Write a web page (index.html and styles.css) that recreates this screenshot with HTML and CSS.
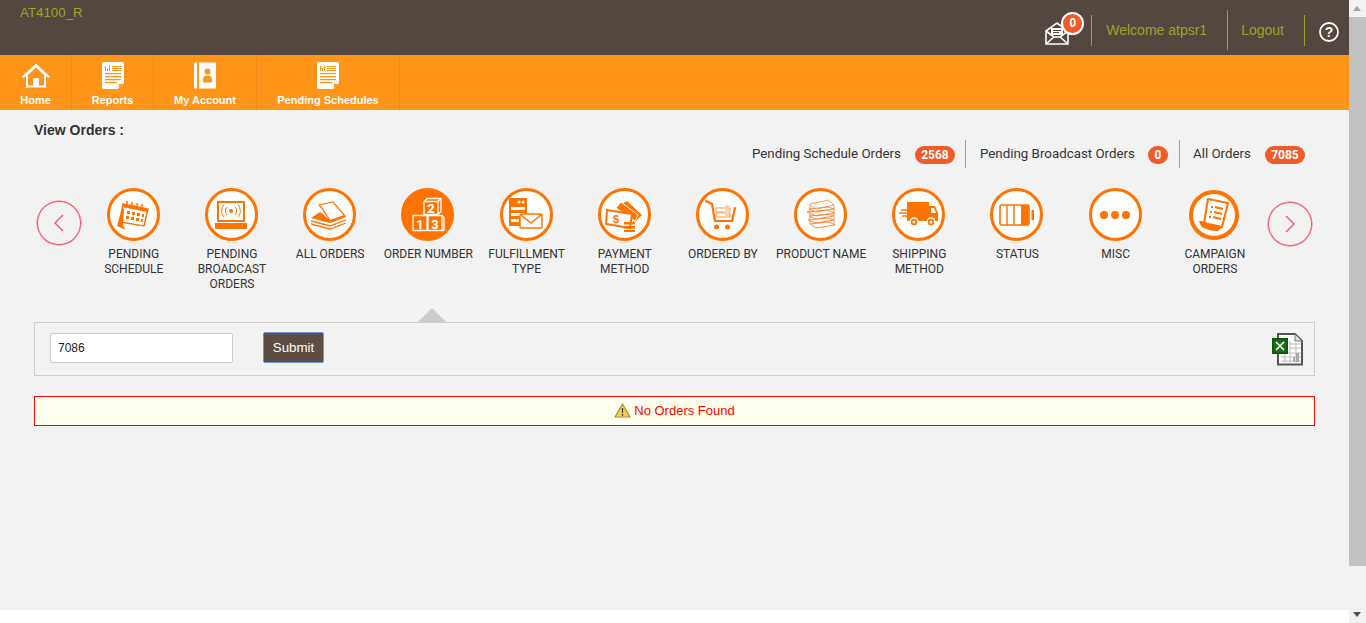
FILE: index.html
```html
<!DOCTYPE html>
<html lang="en">
<head>
  <meta charset="UTF-8" />
  <title>View Orders</title>
  <link rel="stylesheet" href="styles.css">
</head>
<body>
<svg class="defs" width="0" height="0">
  <symbol id="reportIcon" viewBox="0 0 22 27">
    <path d="M2 0h18a2 2 0 0 1 2 2v19l-6 6H2a2 2 0 0 1-2-2V2a2 2 0 0 1 2-2z" fill="#fff"/>
    <path d="M3 9V4h1v5zM5 9V6h1v3zM7 9V3h1v6zM10 4h9v1h-9zM10 6h9v1h-9zM10 8h9v1h-9zM3 11h16v1.2H3zM3 14h16v1.2H3zM3 17h16v1.2H3zM3 20h12v1.2H3z" fill="#ff9518"/>
    <path d="M17 26v-4h4z" fill="#ff9518"/>
  </symbol>
</svg>

<div class="app">
  <div class="page">
    <header class="topbar">
      <div class="site-code">AT4100_R</div>
      <div class="top-right">
        <div class="mail">
          <svg width="25" height="25" viewBox="0 0 25 25">
            <path d="M1 11L12 3l11 8v13H1z" fill="none" stroke="#fff" stroke-width="1.6"/>
            <path d="M1 24l8-7h6l8 7M1 11l8 6M23 11l-8 6" fill="none" stroke="#fff" stroke-width="1.6"/>
            <path d="M6 8h12v7H6z" fill="#fff"/>
            <path d="M8 10h8v1H8zM8 12h6v1H8z" fill="#53473f"/>
          </svg>
          <span class="mail-count">0</span>
        </div>
        <span class="top-link welcome">Welcome atpsr1</span>
        <span class="top-link logout">Logout</span>
        <span class="help">
          <svg width="20" height="20" viewBox="0 0 20 20">
            <circle cx="10" cy="10" r="9" fill="none" stroke="#fff" stroke-width="1.8"/>
            <text x="10" y="14.5" text-anchor="middle" class="help-mark">?</text>
          </svg>
        </span>
      </div>
    </header>

    <nav class="mainnav">
      <a class="nav-item nav-home">
        <svg width="30" height="26" viewBox="0 0 30 26">
          <path d="M15 1L1 14l1.500 1.500L5 13.500V25h20V13.500l2.500 2L29 14z" fill="#fff"/>
          <path d="M15 5L7 12.500V23h5v-7h6v7h5V12.500z" fill="#ff9518"/>
          <path d="M12 16h6v7h-6z" fill="#fff"/>
        </svg>
        <span>Home</span>
      </a>
      <a class="nav-item nav-reports">
        <svg width="22" height="27"><use href="#reportIcon"/></svg>
        <span>Reports</span>
      </a>
      <a class="nav-item nav-account">
        <svg width="22" height="26" viewBox="0 0 22 26">
          <path d="M1 0h2v26H1a1 1 0 0 1-1-1V1a1 1 0 0 1 1-1zM5 0h16a1 1 0 0 1 1 1v24a1 1 0 0 1-1 1H5z" fill="#fff"/>
          <circle cx="13.500" cy="9" r="3" fill="#ff9518"/>
          <path d="M9 20v-3c0-3 2-4 4.500-4s4.500 1 4.500 4v3z" fill="#ff9518"/>
        </svg>
        <span>My Account</span>
      </a>
      <a class="nav-item nav-pending">
        <svg width="22" height="27"><use href="#reportIcon"/></svg>
        <span>Pending Schedules</span>
      </a>
    </nav>

    <main class="content">
      <h1 class="page-title">View Orders :</h1>

      <div class="counts">
        <div class="count">Pending Schedule Orders <span class="pill">2568</span></div>
        <div class="count">Pending Broadcast Orders <span class="pill pill-round">0</span></div>
        <div class="count">All Orders <span class="pill">7085</span></div>
      </div>

      <div class="carousel">
        <button class="arrow" aria-label="Previous">
          <svg width="12" height="20" viewBox="0 0 12 20"><path d="M10 2l-8 8 8 8" fill="none" stroke="#f2566a" stroke-width="1.400"/></svg>
        </button>
        <div class="filters">
          <div class="filter">
            <div class="ring">
              <svg width="36" height="36" viewBox="0 0 36 36">
                <path d="M8 7l25 5-4 17-24-4z" fill="#fff" stroke="#ff7300" stroke-width="1.500"/>
                <path d="M8 7l25 5-1 3-25-5z" fill="#ff7300"/>
                <path d="M12 14h3v3h-3zM17 15h3v3h-3zM22 16h3v3h-3zM27 17h2v3h-2zM11 19h3v3h-3zM16 20h3v3h-3zM21 21h3v3h-3zM26 22h2v3h-2z" fill="#ff7300"/>
                <path d="M7 11L2 29l9 4-3-4 1-17z" fill="#ff7300"/>
                <path d="M12 4v5M17 5v5M22 6v5M27 7v5" stroke="#ff7300" stroke-width="1.500"/>
              </svg>
            </div>
            <div class="filter-name">PENDING SCHEDULE</div>
          </div>
          <div class="filter">
            <div class="ring">
              <svg width="36" height="36" viewBox="0 0 36 36">
                <rect x="5" y="5" width="26" height="19" fill="none" stroke="#ff7300" stroke-width="2"/>
                <path d="M2 26h32v5a1 1 0 0 1-1 1H3a1 1 0 0 1-1-1z" fill="#ff7300"/>
                <circle cx="18" cy="14" r="2" fill="#ff7300"/>
                <path d="M14 10c-2 2-2 6 0 8M22 10c2 2 2 6 0 8M11 8c-3 3-3 9 0 12M25 8c3 3 3 9 0 12" fill="none" stroke="#ff7300"/>
              </svg>
            </div>
            <div class="filter-name">PENDING BROADCAST ORDERS</div>
          </div>
          <div class="filter">
            <div class="ring">
              <svg width="38" height="36" viewBox="0 0 38 36">
                <path d="M8 8l14-3 12 14-14 6C16 19 13 13 8 8z" fill="#fff" stroke="#ff7300" stroke-width="1.200"/>
                <path d="M9 15L0 21l19 5 16-6-2-2-14 5z" fill="#ff7300"/>
                <path d="M0 24l19 5 16-6M0 27l19 5 16-6" fill="none" stroke="#ff7300" stroke-width="1.300"/>
              </svg>
            </div>
            <div class="filter-name">ALL ORDERS</div>
          </div>
          <div class="filter filter-active">
            <div class="ring">
              <svg width="36" height="36" viewBox="0 0 36 36">
                <path d="M14 4.500l3-3h14v13l-3 3H14zM14 4.500h14v13M28 4.500l3-3" fill="none" stroke="#fff" stroke-width="1.300"/>
                <path d="M3 18.500h14v15H3zM18 18.500h14l2 2v13H18zM32 18.500v15" fill="none" stroke="#fff" stroke-width="1.300"/>
                <text x="21" y="15.500" text-anchor="middle" class="block-num">2</text>
                <text x="10" y="31.500" text-anchor="middle" class="block-num">1</text>
                <text x="25" y="31.500" text-anchor="middle" class="block-num">3</text>
              </svg>
            </div>
            <div class="filter-name">ORDER NUMBER</div>
          </div>
          <div class="filter">
            <div class="ring">
              <svg width="36" height="36" viewBox="0 0 36 36">
                <path d="M1 1h18v28H1z" fill="#ff7300"/>
                <path d="M3 10h14v3H3zM3 16h14v3H3zM3 22h8v3H3z" fill="#fff"/>
                <circle cx="11" cy="5" r="1.500" fill="#fff"/><circle cx="15" cy="5" r="1.500" fill="#fff"/>
                <rect x="12" y="17" width="22" height="14" rx="1.500" fill="#fff" stroke="#ff7300" stroke-width="1.500"/>
                <path d="M13 18l10 8 10-8" fill="none" stroke="#ff7300" stroke-width="1.500"/>
              </svg>
            </div>
            <div class="filter-name">FULFILLMENT TYPE</div>
          </div>
          <div class="filter">
            <div class="ring">
              <svg width="38" height="36" viewBox="0 0 38 36">
                <path d="M14 9L22 4l15 14-7 7z" fill="#ff7300"/>
                <path d="M11 11l5-6 17 13-3 6z" fill="#ff7300" stroke="#fff"/>
                <path d="M2 13l25 4-2 14L1 27z" fill="#fff" stroke="#ff7300" stroke-width="2"/>
                <text x="8" y="26" class="money">$</text>
                <path d="M19 25h11v2.500H19zM19 29h11v2.500H19zM19 33h11V35H19z" fill="#ff7300"/>
              </svg>
            </div>
            <div class="filter-name">PAYMENT METHOD</div>
          </div>
          <div class="filter">
            <div class="ring">
              <svg width="36" height="36" viewBox="0 0 36 36">
                <path d="M2 4l6 3 3 17h17l3-13" fill="none" stroke="#ff7300" stroke-width="2.200" stroke-linecap="round"/>
                <path d="M12 11h14v4H12zM12 16h14v4H12z" fill="none" stroke="#ff9a4d"/>
                <path d="M21 8h4v12h-4z" fill="#ffd0ac"/>
                <circle cx="12.500" cy="30" r="2.500" fill="#ff7300"/><circle cx="23.500" cy="30" r="2.500" fill="#ff7300"/>
              </svg>
            </div>
            <div class="filter-name">ORDERED BY</div>
          </div>
          <div class="filter">
            <div class="ring">
              <svg width="36" height="36" viewBox="0 0 36 36" fill="none" stroke="#ff9a5c">
                <path d="M7 7l18-4 6 5-18 4z" fill="#fff"/>
                <path d="M6 12l19-2 6 2-18 3zM4 15l20-2 8 3-19 3zM6 19l19-2 6 2-18 3zM5 23l20-2 6 2-18 3zM7 27l19-2 6 3-19 3z" stroke="#ff8a3d"/>
                <path d="M7 7v20M31 8v20"/>
              </svg>
            </div>
            <div class="filter-name">PRODUCT NAME</div>
          </div>
          <div class="filter">
            <div class="ring">
              <svg width="40" height="36" viewBox="0 0 40 36">
                <path d="M8 5h22v19H8z" fill="#ff7300"/>
                <path d="M30 9h6l3 7v8h-9z" fill="#ff7300"/>
                <path d="M32 11h3l2 5h-5z" fill="#fff"/>
                <circle cx="15" cy="25" r="4" fill="#ff7300" stroke="#fff" stroke-width="1.500"/>
                <circle cx="32" cy="25" r="4" fill="#ff7300" stroke="#fff" stroke-width="1.500"/>
                <circle cx="15" cy="25" r="1.500" fill="#fff"/><circle cx="32" cy="25" r="1.500" fill="#fff"/>
                <path d="M2 13h6M0 16h8M3 19h5" stroke="#ff7300" stroke-width="1.300"/>
              </svg>
            </div>
            <div class="filter-name">SHIPPING METHOD</div>
          </div>
          <div class="filter">
            <div class="ring">
              <svg width="36" height="22" viewBox="0 0 36 22">
                <rect x="1" y="1" width="29" height="20" rx="1.500" fill="#fff" stroke="#ff7300" stroke-width="1.600"/>
                <path d="M8 1v20M15 1v20" stroke="#ff7300" stroke-width="1.400"/>
                <path d="M22 1h8v20h-8z" fill="#ff7300"/>
                <path d="M32.500 6H35v10h-2.500z" fill="#ff7300"/>
              </svg>
            </div>
            <div class="filter-name">STATUS</div>
          </div>
          <div class="filter">
            <div class="ring">
              <svg width="32" height="10" viewBox="0 0 32 10">
                <circle cx="5" cy="5" r="4" fill="#ff7300"/><circle cx="16" cy="5" r="4" fill="#ff7300"/><circle cx="27" cy="5" r="4" fill="#ff7300"/>
              </svg>
            </div>
            <div class="filter-name">MISC</div>
          </div>
          <div class="filter filter-campaign">
            <div class="ring">
              <svg width="32" height="34" viewBox="0 0 32 34">
                <path d="M10 1l20 4-6 24-18-4z" fill="#fff" stroke="#ff7300" stroke-width="2"/>
                <path d="M13 8h2v2h-2zM12 13h2v2h-2zM11 18h2v2h-2z" fill="#ff7300"/>
                <path d="M17 9l8 2M16 14l8 2M15 19l8 2" stroke="#ff7300" stroke-width="2"/>
                <path d="M1 23c5 0 6 2 10 3l13 3c-2 2-3 4-5 4-6 0-10-2-13-3-3-1-4-4-5-7z" fill="#ff7300"/>
              </svg>
            </div>
            <div class="filter-name">CAMPAIGN ORDERS</div>
          </div>
        </div>
        <button class="arrow arrow-next" aria-label="Next">
          <svg width="12" height="20" viewBox="0 0 12 20"><path d="M2 2l8 8-8 8" fill="none" stroke="#f2566a" stroke-width="1.400"/></svg>
        </button>
      </div>

      <div class="search-panel">
        <input class="search-input" type="text" value="7086">
        <button class="submit-btn">Submit</button>
        <svg class="excel" width="32" height="33" viewBox="0 0 32 33">
          <path d="M6 1h17l7 7v23.500H6z" fill="#fff" stroke="#555" stroke-width="2"/>
          <path d="M23 1v7h7z" fill="#ddd" stroke="#777"/>
          <path d="M9 20h20M9 24h20M9 28h20M13 15v16M18 8v23M24 10v21M18 11h11M18 15h11" stroke="#bbb" stroke-width="1"/>
          <path d="M21 29v-5h2v5zM24 29v-9h3v9z" fill="#aaa"/>
          <rect x="1" y="6" width="14" height="14" fill="#1b6e1b" stroke="#0a5a0a" stroke-width="2"/>
          <path d="M4 9l8 8M12 9l-8 8" stroke="#fff" stroke-width="1.600"/>
        </svg>
      </div>

      <div class="alert-box">
        <svg width="17" height="15" viewBox="0 0 17 15">
          <path d="M8.500 1L16 14H1z" fill="#f7d13d" stroke="#a98a4a" stroke-width="1.200" stroke-linejoin="round"/>
          <path d="M7.800 5h1.400l-.2 5H8z" fill="#333"/>
          <circle cx="8.500" cy="11.800" r=".9" fill="#333"/>
        </svg>
        No Orders Found
      </div>
    </main>
    <div class="page-foot"></div>
  </div>

  <div class="scrollbar">
    <span class="scroll-up"></span>
    <div class="scroll-thumb"></div>
    <span class="scroll-down"></span>
  </div>
</div>
</body>
</html>
```

FILE: styles.css
```css
* {
  box-sizing: border-box;
}
body {
  margin: 0;
  font-family: "Liberation Sans", Arial, sans-serif;
  background: #fff;
  overflow: hidden;
}
.defs {
  position: absolute;
}
.app {
  display: flex;
  height: 623px;
}
.page {
  width: 1349px;
  display: flex;
  flex-direction: column;
}

/* top bar */
.topbar {
  height: 55px;
  background: #53473f;
  display: flex;
  justify-content: space-between;
}
.site-code {
  padding: 5px 0 0 20px;
  font-size: 13.33px;
  color: #9aa528;
}
.top-right {
  display: flex;
  align-items: center;
  height: 55px;
  color: #9aa528;
  font-size: 14px;
}
.mail {
  position: relative;
  width: 46px;
  height: 31px;
  margin-top: 6px;
  border-right: 1px solid #9aa528;
}
.mail svg {
  position: absolute;
  left: -1px;
  top: 5px;
}
.mail-count {
  position: absolute;
  left: 15px;
  top: -3px;
  width: 23px;
  height: 23px;
  border: 2px solid #fff;
  border-radius: 50%;
  background: #f15a29;
  color: #fff;
  font-size: 12px;
  font-weight: bold;
  line-height: 19px;
  text-align: center;
}
.top-link {
  display: flex;
  align-items: center;
}
.welcome {
  padding: 0 20px 0 14px;
  height: 40px;
  margin-top: 5px;
  border-right: 1px solid #9aa528;
}
.logout {
  padding: 0 20px 2px 13px;
  height: 31px;
  margin-top: 6px;
  border-right: 1px solid #9aa528;
}
.help {
  display: block;
  padding: 0 10px 0 14px;
  height: 20px;
  margin-top: 9px;
}
.help-mark {
  font-family: "Liberation Sans", Arial, sans-serif;
  font-size: 14px;
  font-weight: bold;
  fill: #fff;
}

/* main nav */
.mainnav {
  height: 55px;
  background: #ff9518;
  display: flex;
}
.nav-item {
  height: 55px;
  padding-top: 7px;
  border-right: 1px solid #f5861a;
  display: flex;
  flex-direction: column;
  align-items: center;
  color: #fff;
  font-size: 11px;
  font-weight: bold;
}
.nav-item svg {
  height: 27px;
}
.nav-item span {
  margin-top: 5px;
}
.nav-home {
  width: 72px;
}
.nav-reports {
  width: 82px;
}
.nav-account {
  width: 103px;
}
.nav-pending {
  width: 143px;
}

/* content */
.content {
  flex: 1;
  background: #f2f2f2;
  padding: 12px 34px 0;
}
.page-foot {
  height: 13px;
  background: #fff;
}
.page-title {
  margin: 0;
  font-size: 14px;
  line-height: 16px;
  color: #333;
}
.counts {
  display: flex;
  justify-content: flex-end;
  height: 28px;
  margin: 2px 10px 0 0;
}
.count {
  display: flex;
  align-items: center;
  gap: 14px;
  padding: 0 10px 2px 14px;
  border-right: 1px solid #b5a642;
  font-family: Roboto, sans-serif;
  font-size: 13.33px;
  color: #333;
}
.count:last-child {
  border-right: 0;
  padding: 0 0 2px 13px;
}
.pill {
  height: 18px;
  min-width: 40px;
  margin-top: 4px;
  padding: 0 6px;
  border-radius: 9px;
  background: #f15a29;
  color: #fff;
  font-size: 12px;
  font-weight: bold;
  line-height: 18px;
  text-align: center;
}
.pill-round {
  min-width: 20px;
  margin-left: -1px;
  margin-right: 1px;
}

/* filter carousel */
.carousel {
  display: flex;
  margin: 20px -7px 0 3px;
  height: 120px;
}
.arrow {
  flex: none;
  width: 44px;
  height: 44px;
  margin-top: 13px;
  padding: 0;
  border: 1px solid #f2566a;
  border-radius: 50%;
  box-shadow: 0 0 0 0.5px #f2566a;
  background: transparent;
  display: flex;
  align-items: center;
  justify-content: center;
}
.arrow-next {
  margin-top: 14px;
  margin-left: 5.8px;
}
.filters {
  display: flex;
  margin-left: 3.2px;
}
.filter {
  width: 98.2px;
  display: flex;
  flex-direction: column;
  align-items: center;
}
.ring {
  width: 53px;
  height: 53px;
  border: 3px solid #ff7300;
  border-radius: 50%;
  background: #fff;
  display: flex;
  align-items: center;
  justify-content: center;
  overflow: hidden;
}
.filter-active .ring {
  background: #ff7300;
}
.filter-campaign {
  padding-left: 2px;
}
.filter-campaign .ring {
  width: 50px;
  height: 50px;
  margin: 2px 0 1px;
  border-width: 4px;
}
.filter-name {
  margin: 6px 0 0 1px;
  width: 94px;
  font-family: Roboto, sans-serif;
  font-size: 12px;
  line-height: 15px;
  color: #333;
  text-align: center;
}
.block-num {
  font-family: Roboto, sans-serif;
  font-size: 13px;
  font-weight: bold;
  fill: #fff;
}
.money {
  font-family: "Liberation Sans", Arial, sans-serif;
  font-size: 11px;
  font-weight: bold;
  fill: #ff7300;
}

/* search panel */
.search-panel {
  position: relative;
  height: 54px;
  margin-top: 14px;
  border: 1px solid #ccc;
  display: flex;
  align-items: flex-start;
  padding-left: 15px;
}
.search-panel::before {
  content: "";
  position: absolute;
  left: 383px;
  top: -15px;
  border-left: 14px solid transparent;
  border-right: 14px solid transparent;
  border-bottom: 14px solid #ccc;
}
.search-input {
  width: 183px;
  height: 30px;
  margin-top: 10px;
  padding: 0 7px;
  border: 1px solid #ccc;
  border-radius: 2px;
  background: #fff;
  font-family: "Liberation Sans", Arial, sans-serif;
  font-size: 12px;
  color: #222;
}
.submit-btn {
  width: 61px;
  height: 31px;
  margin: 9px 0 0 30px;
  padding: 0;
  border: 1px solid #6b93dc;
  border-radius: 2px;
  background: #5c4d45;
  color: #fff;
  font-family: "Liberation Sans", Arial, sans-serif;
  font-size: 13.33px;
}
.excel {
  margin: 10px 10px 0 auto;
}

/* message */
.alert-box {
  height: 30px;
  margin-top: 20px;
  padding-bottom: 2px;
  border: 1px solid #f00;
  background: #ffffee;
  color: #f00;
  font-size: 13px;
  display: flex;
  align-items: center;
  justify-content: center;
  gap: 3px;
}

/* scrollbar drawn by hand */
.scrollbar {
  width: 17px;
  background: #f1f1f1;
  position: relative;
}
.scroll-thumb {
  position: absolute;
  top: 17px;
  left: 0;
  width: 17px;
  height: 549px;
  background: #c1c1c1;
}
.scroll-up,
.scroll-down {
  position: absolute;
  left: 4px;
  border-left: 4px solid transparent;
  border-right: 4px solid transparent;
}
.scroll-up {
  top: 6px;
  border-bottom: 5px solid #a3a3a3;
}
.scroll-down {
  top: 612px;
  border-top: 5px solid #505050;
}
```
